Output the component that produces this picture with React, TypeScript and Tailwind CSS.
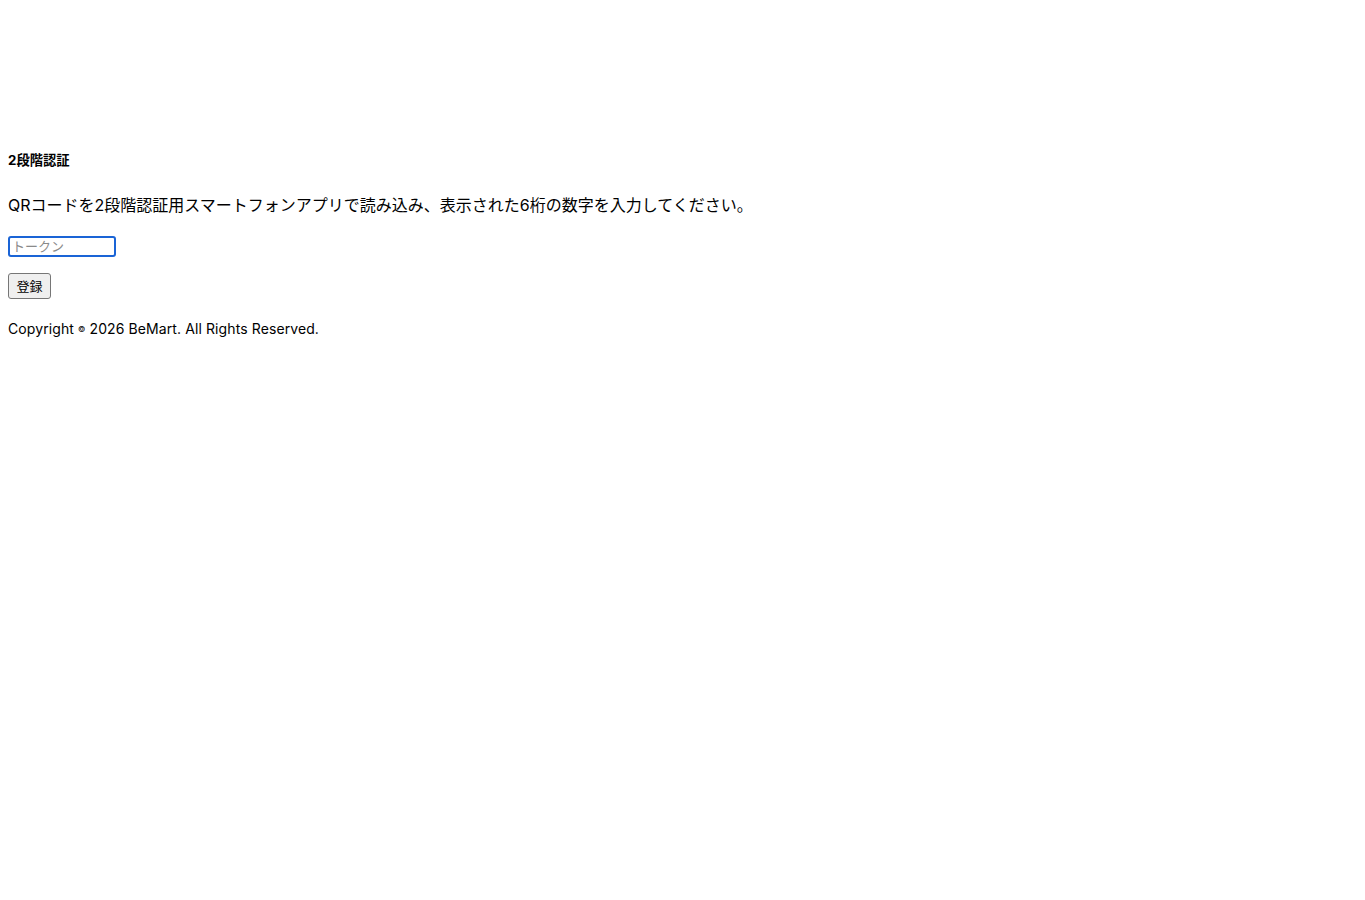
export default function App() {
  return (
    <div className="min-h-[900px] bg-white px-2 pt-[152px] text-black" style={{ fontFamily: 'Inter, "Noto Sans CJK JP", sans-serif' }}>
      <h5 className="text-[13.3px] font-bold leading-[16px]">2段階認証</h5>
      <p className="mt-[27px] text-[16px] leading-[20px]">QRコードを2段階認証用スマートフォンアプリで読み込み、表示された6桁の数字を入力してください。</p>
      <div className="mt-[21px] flex">
        <input
          type="text"
          placeholder="トークン"
          className="h-[21px] w-[108px] rounded-[3px] border-2 border-[#1a64d6] px-[2px] pb-[2px] text-[13px] leading-[15px] outline-none placeholder:text-[#8a8a8a]"
        />
      </div>
      <div className="mt-4 flex">
        <button className="h-[26px] w-[43px] rounded-[3px] border border-[#767676] bg-[#efefef] text-[13px] leading-[16px] text-black">登録</button>
      </div>
      <p className="mt-[21px] text-[14px] leading-[17px] tracking-[0.1px]">Copyright <span className="text-[8px] align-[2px]">©</span> 2026 BeMart. All Rights Reserved.</p>
    </div>
  );
}
